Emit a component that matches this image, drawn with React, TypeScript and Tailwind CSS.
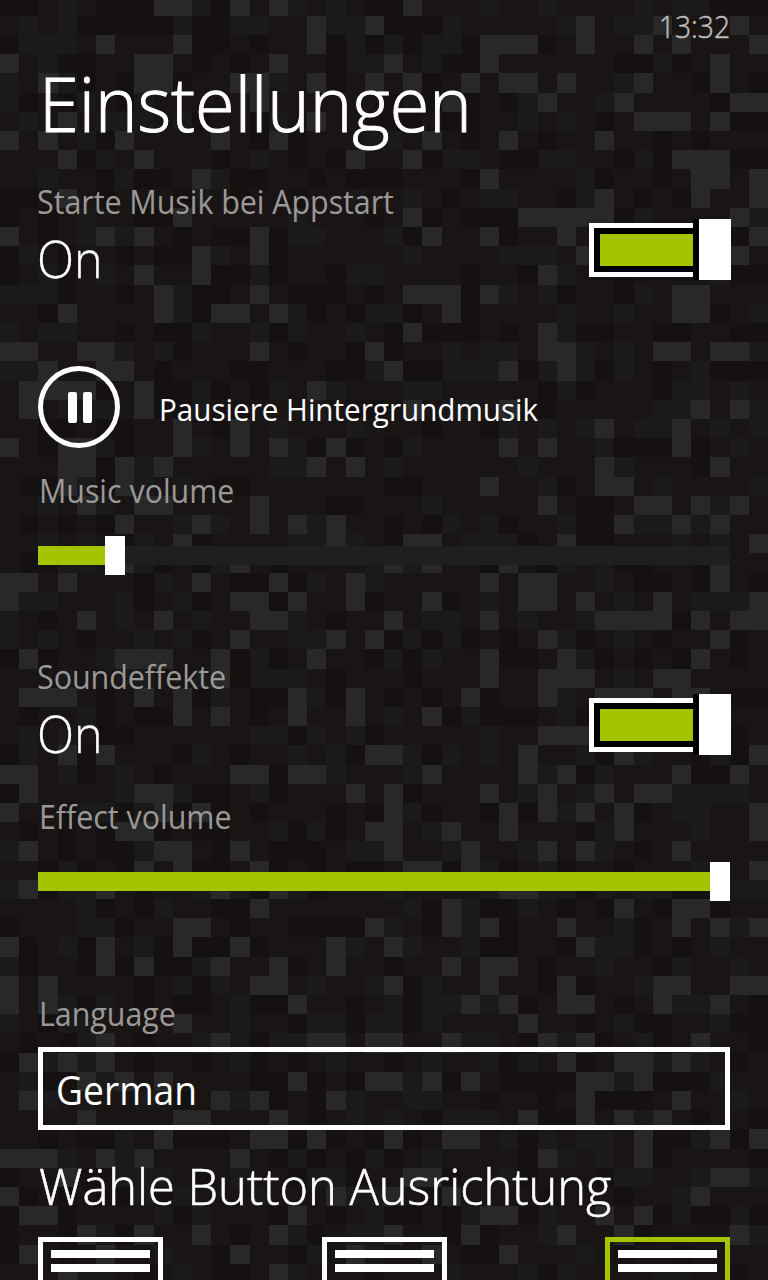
import React, { useState } from "react";

const CELL = 19.2;
const COLS = 40;

// light cells of the camouflage backdrop, one list of columns per row
const LIGHT_CELLS: number[][] = [
  [8, 9, 12, 14, 21],
  [16, 19, 30, 34, 38],
  [5, 9, 16, 25, 26, 27, 30, 33, 35, 39],
  [0, 7, 8, 14, 20, 25, 37],
  [2, 7, 8, 12, 13, 16, 19, 21, 24, 26, 27, 29, 33, 37],
  [13, 23, 28, 32, 38, 39],
  [3, 16, 33, 34, 35, 37],
  [0, 2, 6, 11, 14, 22, 26, 31],
  [3, 7, 18, 21, 35, 36, 37],
  [10, 25, 36, 37, 39],
  [3, 31, 36, 39],
  [9, 21, 27, 28, 29, 30, 31, 38],
  [0, 5, 7, 13, 22, 25, 29, 39],
  [10, 13, 30, 38],
  [7, 10, 28],
  [8, 13, 21, 22, 23, 25, 35, 36],
  [3, 8, 11, 12, 14, 23, 35, 36],
  [21, 28],
  [0, 1, 4, 5, 13, 19, 28, 29, 34, 35, 37, 38],
  [2, 5, 6, 20, 26, 29],
  [1, 2, 3, 4, 7, 16],
  [1, 7, 21, 26, 36, 38],
  [9, 12, 31, 35],
  [0, 3, 4, 9, 12, 14, 17, 26, 28, 35],
  [3, 4, 6, 8, 16, 18, 31, 37],
  [3, 6, 25, 31, 32],
  [4, 7, 8, 13, 28, 33, 34, 36, 38],
  [6, 10, 13, 15, 17, 32, 35, 37],
  [9, 17, 21, 22, 29, 39],
  [6, 12, 20, 22, 26, 37],
  [0, 1, 3, 10, 14, 18, 25, 27, 28, 37],
  [0, 12, 13, 15, 18, 22, 27, 28, 30, 34, 39],
  [4, 8, 13, 14, 20, 25, 31, 32, 33, 34, 36, 38, 39],
  [12, 17, 19, 28, 37],
  [1, 6, 7, 8, 11, 16, 25, 29, 36],
  [11, 25, 28, 29, 30, 34, 35],
  [1, 2, 3, 7, 9, 15, 18, 24, 28, 31, 32, 33, 35, 36],
  [9, 11, 15, 18, 22],
  [28, 29, 30],
  [3, 5, 19, 20, 27, 32, 39],
  [0, 1, 12, 13, 15, 16, 22, 27, 29, 35, 38],
  [1, 7, 8, 18, 20, 25, 28, 31, 33, 34],
  [0, 8, 10, 20, 26, 28, 30, 32, 39],
  [6, 7, 19, 20, 23, 26, 32, 39],
  [1, 8, 9, 12, 20, 24, 28, 30, 35],
  [7, 9, 13, 21, 22, 24, 39],
  [1, 5, 11, 14, 26, 27],
  [13, 23, 32, 35, 36],
  [9, 10, 19, 23, 25, 29, 35, 37, 39],
  [0, 5, 9, 12, 17, 20, 30],
  [5, 7, 11, 14, 17, 23, 25, 26],
  [0, 2, 13, 14, 20, 25, 29, 34, 35, 38, 39],
  [0, 2, 15, 24, 26, 29, 30, 34, 37],
  [9, 27],
  [5, 11, 16, 17, 19, 20, 23, 28, 30, 36],
  [1, 3, 5, 29, 32, 33, 35],
  [4, 6, 8, 15, 19, 20, 22, 24, 30, 31, 33],
  [1, 11, 13, 17, 30, 35],
  [4, 9, 10, 14, 27, 30, 32, 34],
  [8, 13, 14, 16, 20, 23, 24, 33, 37, 39],
  [0, 1, 2, 5, 7, 12, 28, 33],
  [3, 21, 22, 37, 38],
  [0, 17, 20, 23, 36],
  [1, 2, 15, 25, 26, 31, 33],
  [4, 7, 10, 14, 20, 24, 29, 32, 38],
  [1, 5, 12, 18, 22, 26],
  [3, 14],
];

const cellColor = (row: number, col: number) => {
  if (LIGHT_CELLS[row].includes(col)) return "#282828";
  const n = Math.abs(Math.sin(row * 12.9898 + col * 78.233) * 43758.5453) % 1;
  if (n < 0.24) return "#151110";
  if (n < 0.46) return "#1b1a1b";
  return "#191514";
};

const Backdrop: React.FC = () => (
  <svg
    className="absolute inset-0"
    width="768"
    height="1280"
    shapeRendering="crispEdges"
  >
    {LIGHT_CELLS.map((_, row) =>
      Array.from({ length: COLS }, (_, col) => (
        <rect
          key={`${row}-${col}`}
          x={col * CELL}
          y={15.7 + (row - 1) * CELL}
          width={CELL}
          height={CELL}
          fill={cellColor(row, col)}
        />
      ))
    )}
  </svg>
);

interface ToggleProps {
  label: string;
  on: boolean;
  onToggle: () => void;
}

const Toggle: React.FC<ToggleProps> = ({ label, on, onToggle }) => (
  <div className="flex h-[107px] justify-between">
    <div className="-ml-px pt-px">
      <div className="origin-left scale-x-[0.954] text-[32px] leading-10 tracking-[-0.1px] whitespace-nowrap text-[#9b9998]">
        {label}
      </div>
      <div className="mt-[6px] w-20 origin-left scale-x-[0.95] text-[51px] leading-[60px] font-light [-webkit-text-stroke:0.3px_white]">
        {on ? "On" : "Off"}
      </div>
    </div>
    <button
      onClick={onToggle}
      className="mt-[38px] -mr-px flex h-[61px] w-[142px] items-center"
    >
      <span className="flex h-[54px] flex-1 border-[5px] border-r-0 border-white bg-black py-[6px] pl-[6px]">
        <span className="flex-1 bg-[#a4c400]" />
      </span>
      <span className="h-[61px] w-[38px] border-l-6 border-black bg-white" />
    </button>
  </div>
);

interface SliderProps {
  label: string;
  value: number;
}

const Slider: React.FC<SliderProps> = ({ label, value }) => (
  <div>
    <div className="origin-left scale-x-[0.949] pt-px pl-px text-[32px] leading-10 text-[#9b9998]">
      {label}
    </div>
    <div className="mt-[25px] flex h-[39px] items-center">
      <div className="h-[19px] bg-[#a4c400]" style={{ width: value }} />
      <div className="h-[39px] w-5 bg-white" />
      <div className="h-[19px] flex-1 bg-[#1f1f1f]" />
    </div>
  </div>
);

const AlignOption: React.FC<{ active?: boolean }> = ({ active }) => (
  <button
    className={`flex h-[125px] w-[125px] flex-col gap-1.5 border-[5px] px-2 pt-2 ${
      active ? "border-[#a4c400]" : "border-white"
    }`}
  >
    <span className="h-2 w-full bg-white" />
    <span className="h-2 w-full bg-white" />
  </button>
);

export default function App() {
  const [startMusic, setStartMusic] = useState(true);
  const [effects, setEffects] = useState(true);

  return (
    <div className="relative h-[1280px] w-[768px] overflow-hidden bg-[#191514] font-['Open_Sans','Noto_Sans',sans-serif] text-white">
      <Backdrop />
      <div className="relative flex flex-col pr-[38px] pl-[38px]">
        <div className="h-[53px] origin-right scale-x-[0.91] text-right text-[31px] leading-[53px] font-light text-[#bcbcbc] [-webkit-text-stroke:0.5px_#bcbcbc]">
          13:32
        </div>
        <h1 className="h-[97px] origin-left scale-x-[0.96] pt-0.5 pl-px text-[75px] leading-[97px] font-light [-webkit-text-stroke:1px_white]">
          Einstellungen
        </h1>

        <div className="mt-[31px]">
          <Toggle
            label="Starte Musik bei Appstart"
            on={startMusic}
            onToggle={() => setStartMusic(!startMusic)}
          />
        </div>

        <div className="mt-[78px] flex h-[82px] items-center">
          <button className="flex h-[82px] w-[82px] items-center justify-center gap-1.5 rounded-full border-5 border-white pl-0.5">
            <span className="h-[31px] w-[9px] rounded-xs bg-white" />
            <span className="h-[31px] w-[9px] rounded-xs bg-white" />
          </button>
          <span className="ml-[39px] origin-left scale-x-[0.94] pt-[3px] text-[31.5px] leading-10 whitespace-nowrap">
            Pausiere Hintergrundmusik
          </span>
        </div>

        <div className="mt-[22px]">
          <Slider label="Music volume" value={67} />
        </div>

        <div className="mt-[81px]">
          <Toggle
            label="Soundeffekte"
            on={effects}
            onToggle={() => setEffects(!effects)}
          />
        </div>

        <div className="mt-[33px]">
          <Slider label="Effect volume" value={672} />
        </div>

        <div className="mt-[92px] origin-left scale-x-[0.949] pt-px pl-px text-[32px] leading-10 text-[#9b9998]">
          Language
        </div>
        <div className="mt-[13px] flex h-[83px] items-center border-5 border-white pl-[13px]">
          <span className="origin-left scale-x-[0.93] pt-[3px] text-[40px]">
            German
          </span>
        </div>

        <h2 className="mt-[25px] h-[60px] origin-left scale-x-[0.975] pt-px pl-px text-[50px] leading-[60px] font-light whitespace-nowrap [-webkit-text-stroke:0.6px_white]">
          Wähle Button Ausrichtung
        </h2>
        <div className="mt-[22px] flex justify-between">
          <AlignOption />
          <AlignOption />
          <AlignOption active />
        </div>
      </div>
    </div>
  );
}
